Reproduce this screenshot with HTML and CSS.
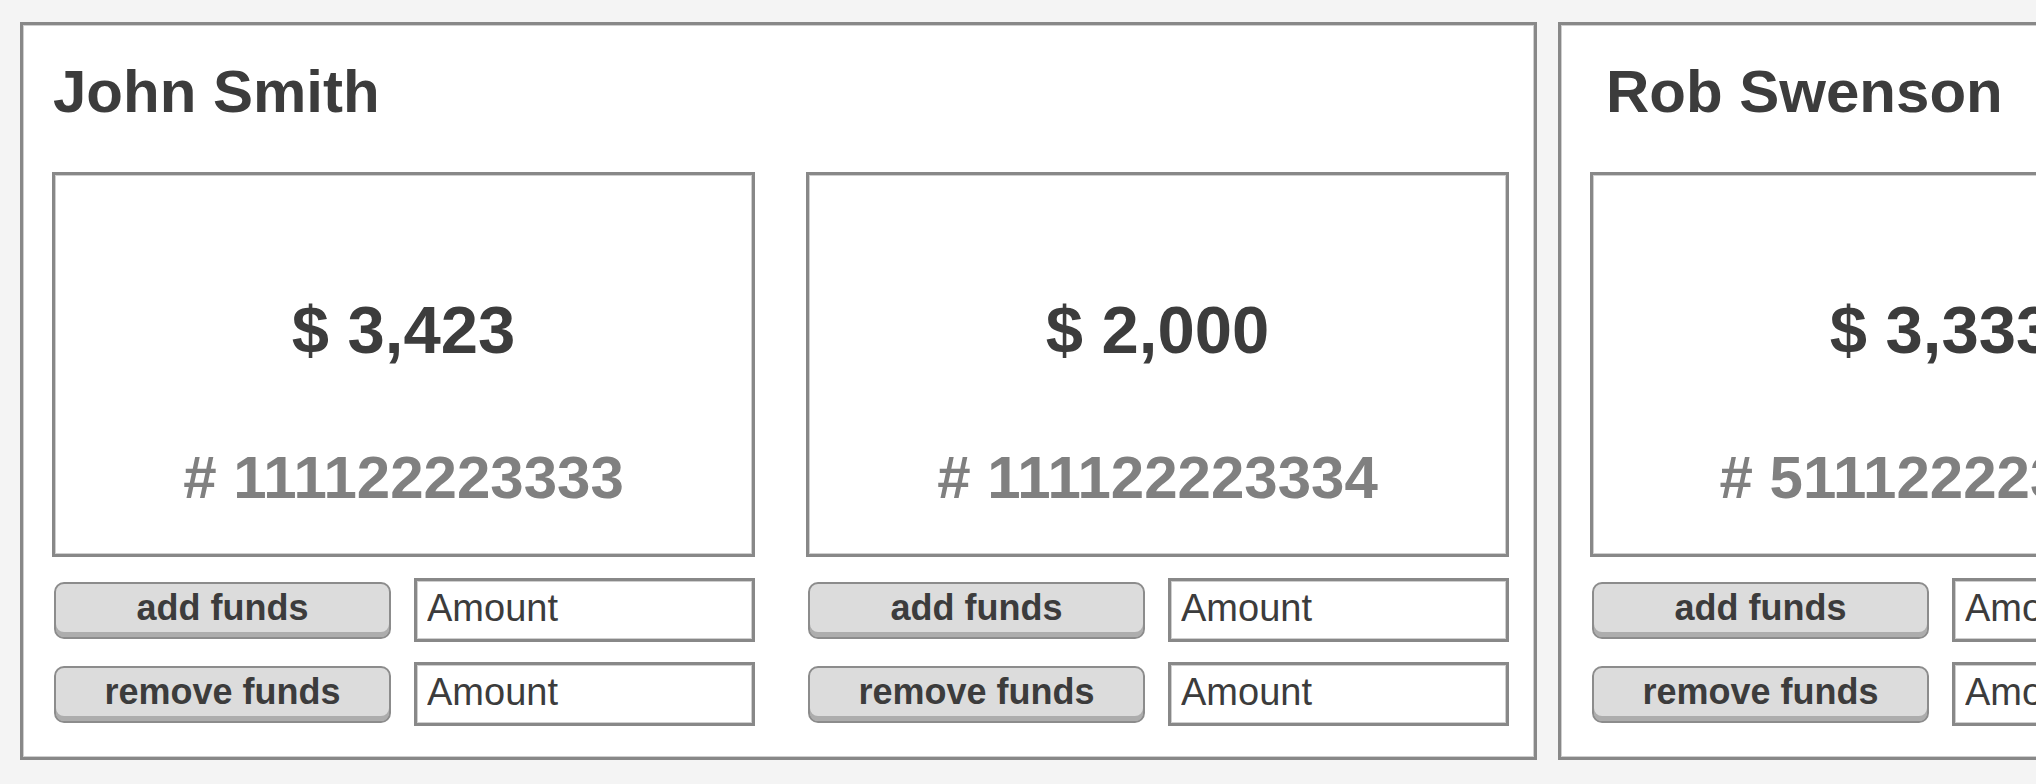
FILE: index.html
```html
<!DOCTYPE html>
<html lang="en">
<head>
<meta charset="utf-8">
<title>Accounts</title>
<link rel="stylesheet" href="styles.css">
</head>
<body>
<main class="board">
  <section class="card">
    <h1 class="card-name">John Smith</h1>
    <div class="accounts">
      <div class="account">
        <div class="account-box">
          <div class="balance">$ 3,423</div>
          <div class="number"># 111122223333</div>
        </div>
        <div class="controls">
          <button class="btn">add funds</button>
          <input class="amount" type="text" placeholder="Amount">
          <button class="btn">remove funds</button>
          <input class="amount" type="text" placeholder="Amount">
        </div>
      </div>
      <div class="account">
        <div class="account-box">
          <div class="balance">$ 2,000</div>
          <div class="number"># 111122223334</div>
        </div>
        <div class="controls">
          <button class="btn">add funds</button>
          <input class="amount" type="text" placeholder="Amount">
          <button class="btn">remove funds</button>
          <input class="amount" type="text" placeholder="Amount">
        </div>
      </div>
    </div>
  </section>
  <section class="card">
    <h1 class="card-name card-name--wide">Rob Swenson</h1>
    <div class="accounts">
      <div class="account">
        <div class="account-box">
          <div class="balance">$ 3,333</div>
          <div class="number"># 511122223333</div>
        </div>
        <div class="controls">
          <button class="btn">add funds</button>
          <input class="amount" type="text" placeholder="Amount">
          <button class="btn">remove funds</button>
          <input class="amount" type="text" placeholder="Amount">
        </div>
      </div>
    </div>
  </section>
</main>
</body>
</html>
```
FILE: styles.css
```css
html, body {
  margin: 0;
  padding: 0;
  background: #f4f4f4;
  overflow: hidden;
  font-family: "Liberation Sans", Arial, sans-serif;
  color: #3c3c3c;
}

.board {
  display: flex;
  gap: 21px;
  padding: 22px 0 0 20px;
  width: max-content;
}

.card {
  flex: 0 0 auto;
  box-sizing: border-box;
  width: 1517px;
  height: 738px;
  background: #fff;
  border: 3px solid #888;
  box-shadow: inset 0 0 0 1px #cfcfcf;
  padding: 37px 0 0 29px;
}

.card-name {
  margin: 0 0 50px 0;
  font-size: 60px;
  line-height: 60px;
  font-weight: bold;
  color: #3c3c3c;
  padding-left: 1px;
}

.card-name--wide {
  padding-left: 16px;
}

.accounts {
  display: grid;
  grid-template-columns: 703px 703px;
  column-gap: 51px;
}

.account {
  display: flex;
  flex-direction: column;
  gap: 21px;
}

.account-box {
  box-sizing: border-box;
  height: 385px;
  border: 3px solid #888;
  box-shadow: inset 0 0 0 1px #cfcfcf;
  display: flex;
  flex-direction: column;
  align-items: center;
  padding-top: 121px;
}

.balance {
  font-size: 67px;
  line-height: 67px;
  font-weight: bold;
  color: #3c3c3c;
}

.number {
  margin-top: 85px;
  font-size: 60px;
  line-height: 60px;
  font-weight: bold;
  color: #808080;
}

.controls {
  display: grid;
  grid-template-columns: 337px 341px;
  column-gap: 23px;
  row-gap: 20px;
  padding-left: 2px;
  align-items: center;
}

.btn {
  box-sizing: border-box;
  height: 57px;
  margin: 0;
  padding: 0 0 4px 0;
  border: 2px solid #8c8c8c;
  border-radius: 10px;
  background: #dcdcdc;
  box-shadow: inset 0 -5px 0 #adadad;
  font-family: "Liberation Sans", Arial, sans-serif;
  font-size: 36px;
  font-weight: bold;
  color: #3c3c3c;
}

.amount {
  box-sizing: border-box;
  height: 64px;
  width: 341px;
  margin: 0;
  padding: 0 0 4px 10px;
  border: 3px solid #888;
  box-shadow: inset 0 0 0 1px #cfcfcf;
  background: #fff;
  font-family: "Liberation Sans", Arial, sans-serif;
  font-size: 38px;
  color: #333;
  outline: none;
}

.amount::placeholder {
  color: #3c3c3c;
  opacity: 1;
}
```
